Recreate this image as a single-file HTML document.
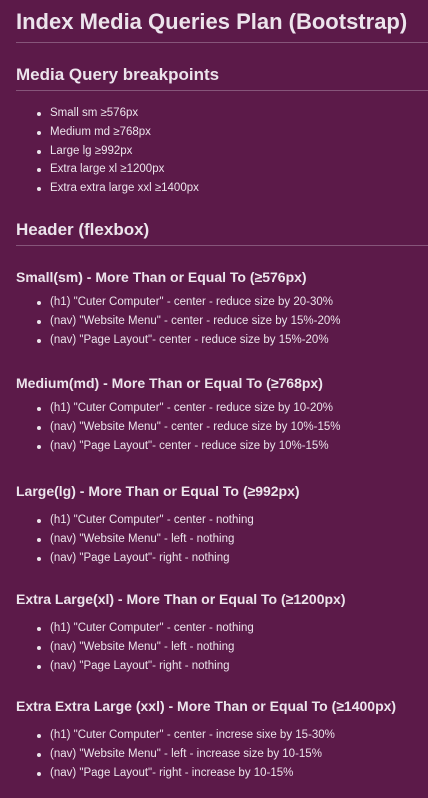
<!DOCTYPE html>
<html><head><meta charset="utf-8"><style>
html,body{margin:0;padding:0}
body{width:428px;height:798px;background:#5c1a49;color:#ece4ec;font-family:"Liberation Sans",sans-serif;position:relative;overflow:hidden}
.a{position:absolute;left:16px;white-space:nowrap;line-height:1}
.h1{font-size:22px;font-weight:bold;top:11px}
.h2{font-size:17px;font-weight:bold}
.h3{font-size:14px;font-weight:bold}
.hr{position:absolute;left:16px;right:0;height:1px;background:#86557a}
.li{position:absolute;left:50px;font-size:11.5px;white-space:nowrap;line-height:1}
.li:before{content:"";position:absolute;left:-13px;top:4px;width:4px;height:4px;border-radius:50%;background:#ece4ec}
</style></head><body>
<div class="a h1">Index Media Queries Plan (Bootstrap)</div>
<div class="hr" style="top:42px"></div>
<div class="a h2" style="top:66px">Media Query breakpoints</div>
<div class="hr" style="top:90px"></div>
<div class="li" style="top:108px">Small sm ≥576px</div>
<div class="li" style="top:127px">Medium md ≥768px</div>
<div class="li" style="top:146px">Large lg ≥992px</div>
<div class="li" style="top:164px">Extra large xl ≥1200px</div>
<div class="li" style="top:183px">Extra extra large xxl ≥1400px</div>

<div class="a h2" style="top:221px">Header (flexbox)</div>
<div class="hr" style="top:245px"></div>

<div class="a h3" style="top:270px">Small(sm) - More Than or Equal To (≥576px)</div>
<div class="li" style="top:297px">(h1) "Cuter Computer" - center - reduce size by 20-30%</div>
<div class="li" style="top:316px">(nav) "Website Menu" - center - reduce size by 15%-20%</div>
<div class="li" style="top:335px">(nav) "Page Layout"- center - reduce size by 15%-20%</div>

<div class="a h3" style="top:376px">Medium(md) - More Than or Equal To (≥768px)</div>
<div class="li" style="top:403px">(h1) "Cuter Computer" - center - reduce size by 10-20%</div>
<div class="li" style="top:422px">(nav) "Website Menu" - center - reduce size by 10%-15%</div>
<div class="li" style="top:441px">(nav) "Page Layout"- center - reduce size by 10%-15%</div>

<div class="a h3" style="top:484px">Large(lg) - More Than or Equal To (≥992px)</div>
<div class="li" style="top:515px">(h1) "Cuter Computer" - center - nothing</div>
<div class="li" style="top:534px">(nav) "Website Menu" - left - nothing</div>
<div class="li" style="top:553px">(nav) "Page Layout"- right - nothing</div>

<div class="a h3" style="top:592px">Extra Large(xl) - More Than or Equal To (≥1200px)</div>
<div class="li" style="top:623px">(h1) "Cuter Computer" - center - nothing</div>
<div class="li" style="top:642px">(nav) "Website Menu" - left - nothing</div>
<div class="li" style="top:661px">(nav) "Page Layout"- right - nothing</div>

<div class="a h3" style="top:699px">Extra Extra Large (xxl) - More Than or Equal To (≥1400px)</div>
<div class="li" style="top:730px">(h1) "Cuter Computer" - center - increse sixe by 15-30%</div>
<div class="li" style="top:749px">(nav) "Website Menu" - left - increase size by 10-15%</div>
<div class="li" style="top:768px">(nav) "Page Layout"- right - increase by 10-15%</div>
</body></html>
